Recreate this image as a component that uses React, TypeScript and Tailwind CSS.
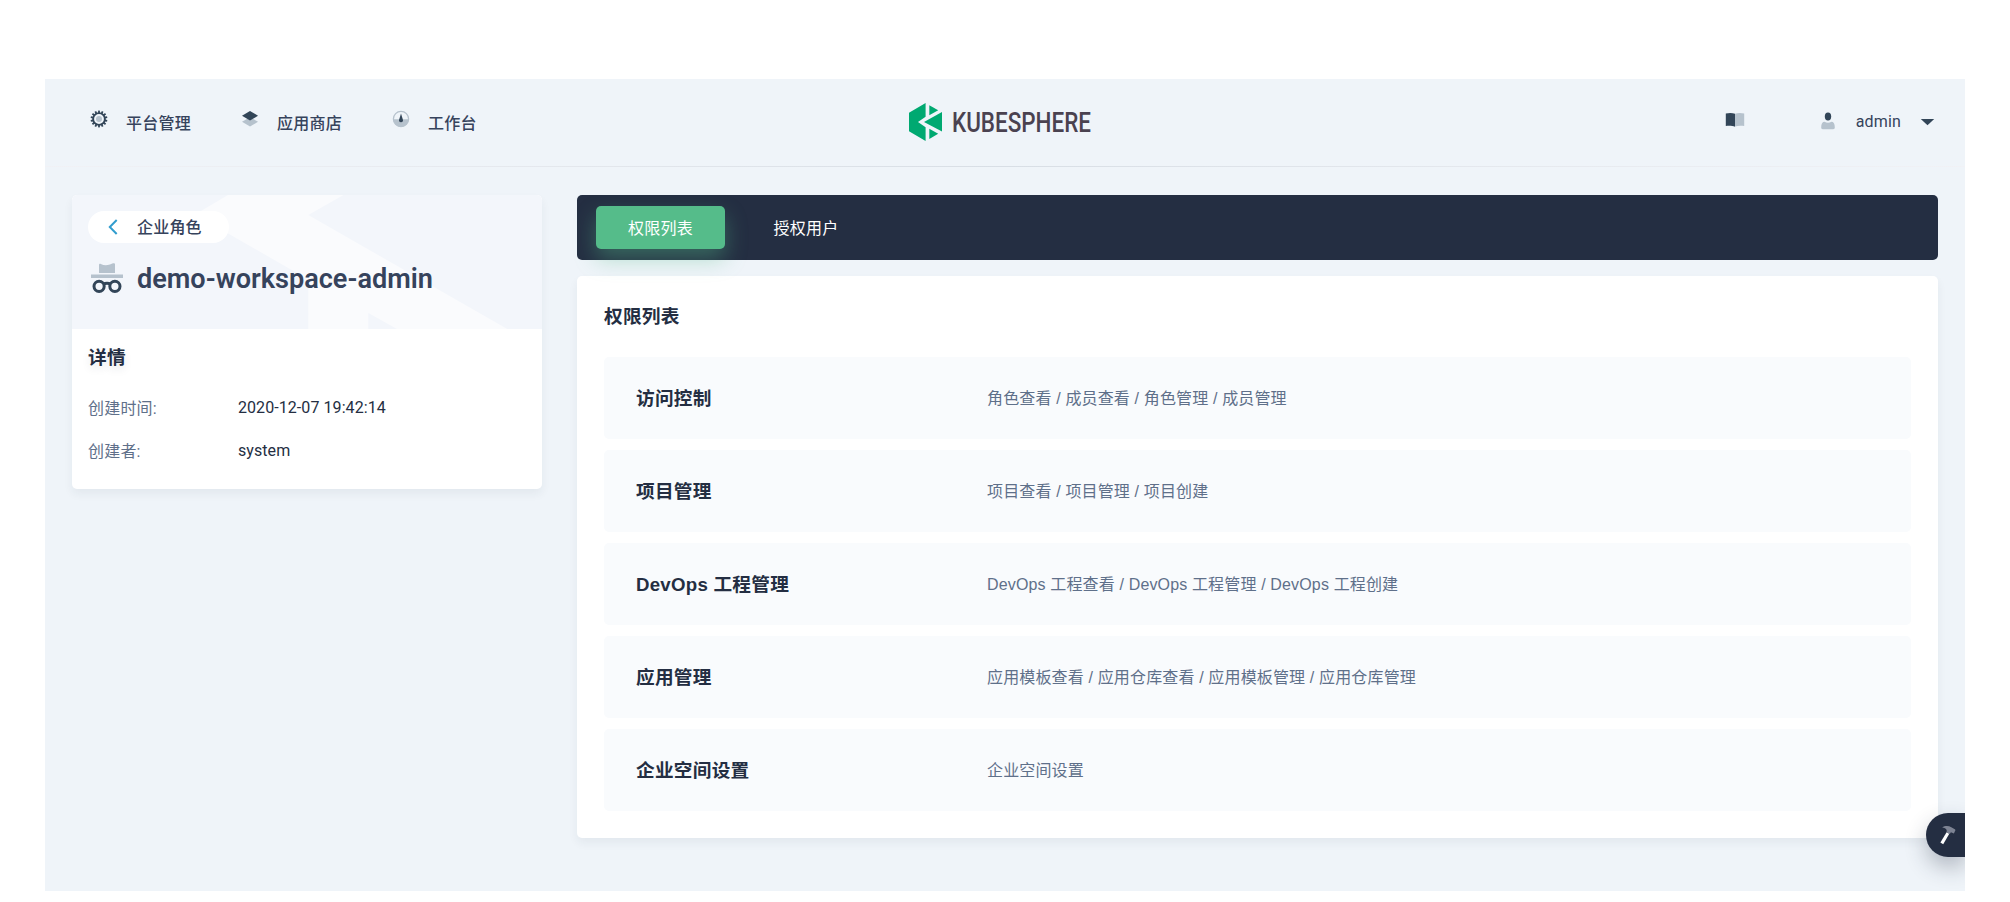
import React from "react";

const NAVY = "#324558";
const MIST = "#b6c2cd";

function GearIcon() {
  const teeth = Array.from({ length: 14 }, (_, i) => (i * 360) / 14);
  return (
    <svg width="18" height="18" viewBox="0 0 18 18">
      {teeth.map((a) => (
        <rect key={a} x="8.1" y="0.6" width="1.8" height="2.6" fill={NAVY} transform={`rotate(${a} 9 9)`} />
      ))}
      <circle cx="9" cy="9" r="5.9" fill="none" stroke={NAVY} strokeWidth="1.9" />
      <circle cx="9" cy="9" r="3" fill={MIST} />
    </svg>
  );
}

function LayersIcon() {
  return (
    <svg width="18" height="18" viewBox="0 0 18 18">
      <path d="M1 11.7 9 7.3l8 4.4-8 4.9z" fill={MIST} />
      <path d="M1 5.7 9 1l8 4.7-8 4.9z" fill={NAVY} />
    </svg>
  );
}

function DashboardIcon() {
  return (
    <svg width="18" height="18" viewBox="0 0 18 18">
      <circle cx="9" cy="9" r="7.6" fill="none" stroke={MIST} strokeWidth="1.3" />
      <path d="M1.4 9.3h15.2a7.6 7.6 0 0 1-15.2 0z" fill={MIST} />
      <path d="M9 3.6 7.1 9.8a1.95 1.95 0 1 0 3.8 0z" fill={NAVY} />
    </svg>
  );
}

function Logo() {
  return (
    <svg className="overflow-visible" width="192" height="40" viewBox="0 0 192 40" aria-label="KubeSphere">
      <g fill="#00a971">
        <path d="M1 10.7 17.6 1v13.8L10 20l7.600 5.200V39L1 29.300z" />
        <path d="M34 10v19.600L16 20z" />
        <path d="M21.300 3.200 30.200 8.200 21.300 13.200z" />
        <path d="M21.300 26.800 30.200 31.800 21.300 37z" />
      </g>
      <text
        x="44"
        y="29.8"
        textLength="139"
        lengthAdjust="spacingAndGlyphs"
        fill="#4a4250"
        fontFamily="Roboto, sans-serif"
        fontWeight="500"
        fontSize="27.6"
      >
        KUBESPHERE
      </text>
    </svg>
  );
}

function BookIcon() {
  return (
    <svg width="20" height="16" viewBox="0 0 20 16">
      <path d="M.8 1.6C4 .7 7.500.8 10 1.800v13C7.500 13.700 4 13.700.8 14z" fill={NAVY} />
      <path d="M10 1.800C12.500.8 16 .7 19.200 1.600V14c-3.200-.3-6.700-.3-9.200.5z" fill={MIST} />
    </svg>
  );
}

function UserIcon() {
  return (
    <svg width="16" height="18" viewBox="0 0 16 18">
      <ellipse cx="8" cy="4.500" rx="3.200" ry="4" fill={NAVY} />
      <path d="M1.200 15.500c0-4 1.200-5.800 3.300-5.800 1 .7 2.200 1 3.500 1s2.500-.3 3.500-1c2.100 0 3.300 1.800 3.300 5.800 0 1-.6 1.700-1.600 1.700H2.800c-1 0-1.600-.7-1.600-1.700z" fill={MIST} />
    </svg>
  );
}

function RoleIcon() {
  return (
    <svg width="32" height="32" viewBox="0 0 32 32">
      <path d="M8 11V3.200c0-1.200.8-1.700 1.800-1.200 3.600 1.700 7.200 1.600 11.500-.4C23.200.9 24 1.400 24 2.600V11z" fill={MIST} />
      <path d="M0 12.600h32v3.400H0z" fill={MIST} />
      <g fill="none" stroke={NAVY} strokeWidth="3">
        <circle cx="8.100" cy="24.300" r="5.100" />
        <circle cx="23.900" cy="24.300" r="5.100" />
        <path d="M12.600 22.200c1.600-1.300 5.200-1.300 6.800 0" />
      </g>
    </svg>
  );
}

function HammerIcon() {
  return (
    <svg width="18" height="20" viewBox="0 0 18 20">
      <path d="M7.600 7.200 10.300 8.700 4.200 19.200 1.400 17.600z" fill="#fff" />
      <path d="M3.200 2.500C6 .6 9.500.6 12.300 2.300L15.800 4.300 16.500 5 14.900 8.400 11.900 7.300 10.800 8.900 7.500 7.200C8.600 4.600 6.500 3 3.200 2.500z" fill="#7d8393" />
    </svg>
  );
}

const nav = [
  { label: "平台管理", icon: <GearIcon /> },
  { label: "应用商店", icon: <LayersIcon /> },
  { label: "工作台", icon: <DashboardIcon /> },
];

const details = [
  { name: "创建时间:", value: "2020-12-07 19:42:14" },
  { name: "创建者:", value: "system" },
];

const permissions = [
  { title: "访问控制", items: ["角色查看", "成员查看", "角色管理", "成员管理"] },
  { title: "项目管理", items: ["项目查看", "项目管理", "项目创建"] },
  { title: "DevOps 工程管理", items: ["DevOps 工程查看", "DevOps 工程管理", "DevOps 工程创建"] },
  { title: "应用管理", items: ["应用模板查看", "应用仓库查看", "应用模板管理", "应用仓库管理"] },
  { title: "企业空间设置", items: ["企业空间设置"] },
];

function Header() {
  return (
    <header className="h-[88px] shrink-0">
      <div className="grid h-[87px] grid-cols-[1fr_auto_1fr] items-center pr-[30px] pl-[45px]">
        <nav className="flex">
          {nav.map((n) => (
            <a
              key={n.label}
              className="flex w-[151px] items-center text-[16px] leading-6 font-medium tracking-[0.25px] text-[#36435c]"
            >
              <span className="mr-[18px] -mt-[7px]">{n.icon}</span>
              <span className="pt-[2px]">{n.label}</span>
            </a>
          ))}
        </nav>
        <div className="mr-[17px] mb-[2px]">
          <Logo />
        </div>
        <div className="flex items-center justify-end">
          <span className="mr-[75px] -mt-[5px]">
            <BookIcon />
          </span>
          <span className="mr-[20px] -mt-[4px]">
            <UserIcon />
          </span>
          <span className="mr-[19px] pb-[2px] text-[16px] leading-6 tracking-[0.15px] text-[#36435c]">admin</span>
          <svg className="-mt-px" width="15" height="8" viewBox="0 0 15 8">
            <path d="M.8 1h13.400L7.500 7.200z" fill={NAVY} />
          </svg>
        </div>
      </div>
      <div className="h-px bg-linear-to-r from-[#f1f2f6] via-[#d8dee5] to-[#f1f2f6]" />
    </header>
  );
}

function RoleCard() {
  return (
    <aside className="h-[294px] w-[470px] shrink-0 overflow-hidden rounded-[5px] bg-white shadow-[0_5px_10px_rgba(36,46,66,0.06)]">
      <div className="relative h-[134px] rounded-t-[5px] bg-[#f3f6fb]">
        <svg className="absolute inset-0" width="470" height="134" viewBox="0 0 470 134">
          <path d="M156 0 123 19.500 236.300 84.500V134H296.300V118L325 134H435.300L236.300 20 271.500 0z" fill="#fafbfd" />
        </svg>
        <div className="relative px-4 pt-4">
          <a className="flex h-8 w-[141px] items-center rounded-full bg-white pl-5 text-[16px] font-medium tracking-[0.2px] text-[#36435c]">
            <svg className="mr-[19px]" width="10" height="16" viewBox="0 0 10 16">
              <path d="M8.700 1 1.800 8l6.900 7" fill="none" stroke="#329dce" strokeWidth="2" />
            </svg>
            <span className="pt-px">企业角色</span>
          </a>
          <div className="mt-[19px] flex items-start pl-[3px]">
            <RoleIcon />
            <h1 className="ml-[14px] pt-px text-[27.1px] leading-8 font-semibold whitespace-nowrap text-[#36435c]">
              demo-workspace-admin
            </h1>
          </div>
        </div>
      </div>
      <div className="px-4 pt-[15px]">
        <h2 className="text-[18.67px] leading-7 font-bold tracking-[0.25px] text-[#242e42] [text-shadow:0_4px_8px_rgba(36,46,66,0.1)]">
          详情
        </h2>
        <dl className="mt-[14px]">
          {details.map((d) => (
            <div key={d.name} className="flex h-[43px] items-center text-[16px]">
              <dt className="w-[150px] pt-[2px] tracking-[0.2px] text-[#5f708a]">{d.name}</dt>
              <dd className="tracking-[0.07px] text-[#242e42]">{d.value}</dd>
            </div>
          ))}
        </dl>
      </div>
    </aside>
  );
}

function Tabs() {
  return (
    <div className="flex h-[65px] items-center rounded-[5px] bg-[#242e42] pl-[19px] text-[16px] tracking-[0.2px] text-white">
      <button className="h-[43px] w-[129px] rounded-[5px] bg-[#55bc8a] pt-[2px] shadow-[0_10px_21px_rgba(85,188,138,0.4)]">
        权限列表
      </button>
      <button className="h-[43px] w-[162px] pt-[2px] text-center">授权用户</button>
    </div>
  );
}

function PermissionPanel() {
  return (
    <section className="mt-4 h-[562px] rounded-[5px] bg-white px-[27px] pt-[27px] font-['Liberation_Sans','Noto_Sans_CJK_SC',sans-serif] shadow-[0_5px_10px_rgba(36,46,66,0.06)]">
      <h2 className="text-[18.67px] leading-7 font-bold tracking-[0.25px] text-[#242e42]">权限列表</h2>
      <ul className="mt-[26px] flex flex-col gap-[11px]">
        {permissions.map((p) => (
          <li key={p.title} className="flex h-[82px] items-center rounded-[5px] bg-[#f9fbfd] px-8 pt-px">
            <strong className="w-[351px] text-[18.67px] font-bold tracking-[0.25px] text-[#242e42]">{p.title}</strong>
            <span className="text-[16px] tracking-[0.15px] text-[#5f708a]">{p.items.join(" / ")}</span>
          </li>
        ))}
      </ul>
    </section>
  );
}

export default function App() {
  return (
    <div className="h-[902px] w-[2010px] overflow-hidden bg-white pt-[79px] pl-[45px] font-[Roboto,'Noto_Sans_CJK_SC',sans-serif]">
      <div className="relative flex h-[812px] w-[1920px] flex-col overflow-hidden bg-[#eff4f9]">
        <Header />
        <main className="flex items-start pt-7 pl-[27px]">
          <RoleCard />
          <div className="ml-[35px] w-[1361px]">
            <Tabs />
            <PermissionPanel />
          </div>
        </main>
        <button className="absolute top-[734px] right-0 h-[44px] w-[39px] rounded-l-full bg-[#242e42] pl-[13px] shadow-[0_10px_21px_rgba(36,46,66,0.3)]">
          <HammerIcon />
        </button>
      </div>
    </div>
  );
}
